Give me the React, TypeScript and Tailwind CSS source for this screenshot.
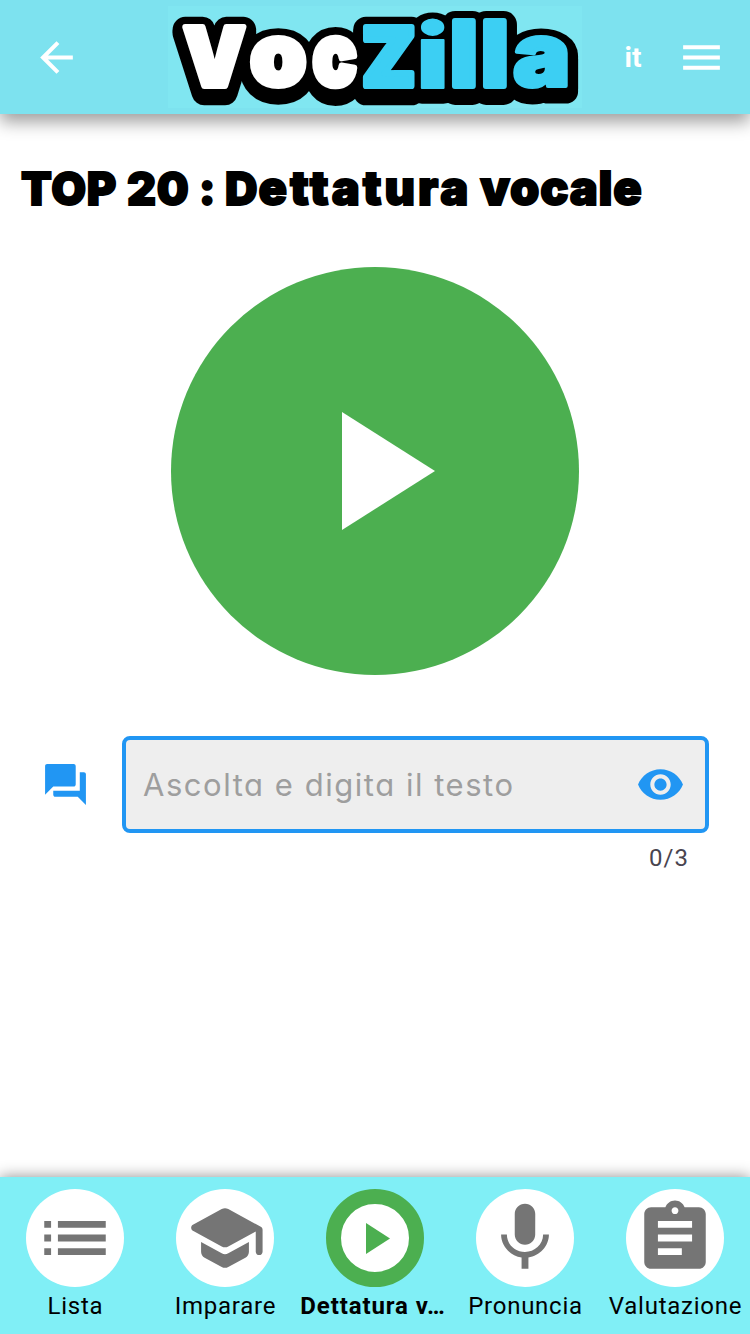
import { useMemo } from "react";
import type { ReactNode } from "react";
import { MdArrowBack, MdMenu, MdQuestionAnswer, MdVisibility, MdList, MdAssignment } from "react-icons/md";

type Letter = { ch: string; x: number; y: number; w: number; h: number; inset: number; fill: string };

const SKY = "#3ccff3";

const LETTERS: Letter[] = [
  { ch: "V", x: 182, y: 24, w: 65, h: 65, inset: 3, fill: "#fff" },
  { ch: "o", x: 250, y: 35, w: 57, h: 54, inset: 3, fill: "#fff" },
  { ch: "c", x: 312, y: 35, w: 46, h: 54, inset: 3, fill: "#fff" },
  { ch: "Z", x: 362, y: 24, w: 53, h: 65, inset: 3, fill: SKY },
  { ch: "i", x: 420, y: 18, w: 25, h: 71, inset: 1, fill: SKY },
  { ch: "l", x: 451, y: 18, w: 25, h: 71, inset: 3, fill: SKY },
  { ch: "l", x: 482, y: 18, w: 25, h: 71, inset: 3, fill: SKY },
  { ch: "a", x: 513, y: 35, w: 55, h: 54, inset: 2, fill: SKY },
];

/* Scales each letter so that its ink fills its box in the wordmark. */
function fitLetters() {
  const ctx = document.createElement("canvas").getContext("2d")!;
  ctx.font = '900 100px Inter, "Liberation Sans", sans-serif';
  return LETTERS.map((l) => {
    const m = ctx.measureText(l.ch);
    const w = m.actualBoundingBoxRight + m.actualBoundingBoxLeft;
    const h = m.actualBoundingBoxAscent + m.actualBoundingBoxDescent;
    const sx = (l.w - l.inset * 2) / w;
    const sy = (l.h - l.inset * 2) / h;
    const tx = l.x + l.inset + m.actualBoundingBoxLeft * sx;
    const ty = l.y + l.inset + m.actualBoundingBoxAscent * sy;
    return { ...l, transform: `translate(${tx} ${ty}) scale(${sx} ${sy})` };
  });
}

function Logo() {
  const letters = useMemo(fitLetters, []);
  return (
    <svg
      viewBox="168 6 414 102"
      className="h-[102px] w-[414px] bg-[#80e6f1] font-['Inter','Liberation_Sans',sans-serif] text-[100px] font-black"
      aria-label="VocZilla"
    >
      <defs>
        {letters.map((l, i) => (
          <text key={i} id={`letter-${i}`} transform={l.transform} vectorEffect="non-scaling-stroke">{l.ch}</text>
        ))}
      </defs>
      {[3, 6].map((dy) => (
        <g key={dy} transform={`translate(0 ${dy})`} fill="#000" stroke="#000" strokeLinejoin="round">
          {letters.map((l, i) => (
            <use key={i} href={`#letter-${i}`} strokeWidth={20 + l.inset * 2} />
          ))}
        </g>
      ))}
      <g strokeLinejoin="round">
        {letters.map((l, i) => (
          <use key={i} href={`#letter-${i}`} fill={l.fill} stroke={l.fill} strokeWidth={l.inset * 2} />
        ))}
      </g>
    </svg>
  );
}

function SchoolIcon() {
  return (
    <svg viewBox="0 0 24 24" className="size-[82px]" fill="currentColor">
      <path d="M5 13.18v2.81c0 .73.4 1.41 1.04 1.76l5 2.73c.6.33 1.32.33 1.92 0l5-2.73c.64-.35 1.04-1.03 1.04-1.76v-2.81l-6.04 3.3c-.6.33-1.32.33-1.92 0L5 13.18z" />
      <path d="M11.04 3.52l-8.43 4.6c-.69.38-.69 1.38 0 1.76l8.43 4.6c.6.33 1.32.33 1.92 0L21 10.09V16c0 .55.45 1 1 1s1-.45 1-1V9.59c0-.37-.2-.7-.52-.88l-9.52-5.19a2.04 2.04 0 0 0-1.92 0z" />
    </svg>
  );
}

function MicIcon() {
  return (
    <svg viewBox="0 0 24 24" className="size-[82px]" fill="currentColor">
      <path d="M12 14c1.66 0 2.99-1.34 2.99-3L15 5c0-1.66-1.34-3-3-3S9 3.34 9 5v6c0 1.66 1.34 3 3 3zm5.3-3c0 3-2.54 5.1-5.3 5.1S6.7 14 6.7 11H5c0 3.41 2.72 6.23 6 6.72V21h2v-3.28c3.28-.48 6-3.3 6-6.72h-1.7z" />
    </svg>
  );
}

function NavItem({ label, active, children }: { label: string; active?: boolean; children: ReactNode }) {
  return (
    <button className="flex w-[150px] flex-col items-center pt-3">
      <span
        className={
          active
            ? "flex size-[98px] items-center justify-center rounded-full border-[15px] border-[#4caf50] bg-white text-[#4caf50]"
            : "flex size-[98px] items-center justify-center rounded-full bg-white text-[#757575]"
        }
      >
        {children}
      </span>
      <span
        className={
          active
            ? "mt-1 -ml-1 text-center text-[24px] leading-[30px] font-bold tracking-[0.9px] whitespace-nowrap"
            : "mt-1 ml-px text-[24px] leading-[30px] tracking-[0.75px] whitespace-nowrap"
        }
      >
        {label}
      </span>
    </button>
  );
}

export default function App() {
  return (
    <div className="flex h-[1334px] w-[750px] flex-col overflow-hidden bg-white font-['Roboto',sans-serif] text-black">
      <header className="flex h-[114px] shrink-0 items-center bg-[#7de2ef] text-white shadow-[0_8px_16px_rgba(0,0,0,0.38)]">
        <div className="flex w-[168px] pl-[32px]">
          <MdArrowBack className="size-[49px]" />
        </div>
        <Logo />
        <span className="w-[102px] pt-0.5 text-center text-[28px] font-bold">it</span>
        <MdMenu className="-ml-[7px] size-[49px]" />
      </header>

      <main className="flex flex-1 flex-col">
        <h1 className="mt-[47px] ml-[21px] h-[54px] font-['Inter','Liberation_Sans',sans-serif] text-[45px] leading-[54px] font-black whitespace-nowrap [-webkit-text-stroke:1.8px_black]">
          <span className="tracking-[0.8px]">TOP 20</span>
          <span className="tracking-[0.2px]"> : </span>
          <span className="tracking-[1px]">D</span>
          <span className="text-[47px] tracking-[3px]">ettatura</span>
          <span> </span>
          <span className="text-[47px] tracking-[0.8px]">vocale</span>
        </h1>

        <button className="mt-[51.5px] flex size-[408px] items-center justify-center self-center rounded-full bg-[#4caf50]">
          <svg viewBox="0 0 93 118" className="ml-[26px] h-[118px] w-[93px]" fill="#fff">
            <path d="M0 0 93 59 0 118z" />
          </svg>
        </button>

        <div className="mt-[61.5px] flex items-center pl-[41px]">
          <MdQuestionAnswer className="size-[49px] text-[#2196f3]" />
          <div className="ml-[32px] flex h-[97px] w-[587px] items-center justify-between rounded-[8px] border-4 border-[#2196f3] bg-[#eeeeee] pr-[20px] pl-[17px]">
            <span className="pt-0.5 font-['Inter',sans-serif] text-[31px] font-normal tracking-[1.53px] whitespace-nowrap text-[#9e9e9e] [font-feature-settings:'cv11']">
              Ascolta e digita il testo
            </span>
            <MdVisibility className="size-[49px] text-[#2196f3]" />
          </div>
        </div>
        <div className="mt-[10px] mr-[61px] self-end text-[24px] leading-[30px] tracking-[1px] text-[#49454f]">0/3</div>
      </main>

      <nav className="flex h-[157px] shrink-0 items-start bg-[#80eff6] shadow-[0_0_14px_rgba(0,0,0,0.45)]">
        <NavItem label="Lista">
          <MdList className="size-[82px]" />
        </NavItem>
        <NavItem label="Imparare">
          <SchoolIcon />
        </NavItem>
        <NavItem label="Dettatura v…" active>
          <svg viewBox="0 0 24 31" className="ml-[6px] h-[31px] w-[24px]" fill="currentColor">
            <path d="M0 0 24 15.5 0 31z" />
          </svg>
        </NavItem>
        <NavItem label="Pronuncia">
          <MicIcon />
        </NavItem>
        <NavItem label="Valutazione">
          <MdAssignment className="size-[82px]" />
        </NavItem>
      </nav>
    </div>
  );
}
